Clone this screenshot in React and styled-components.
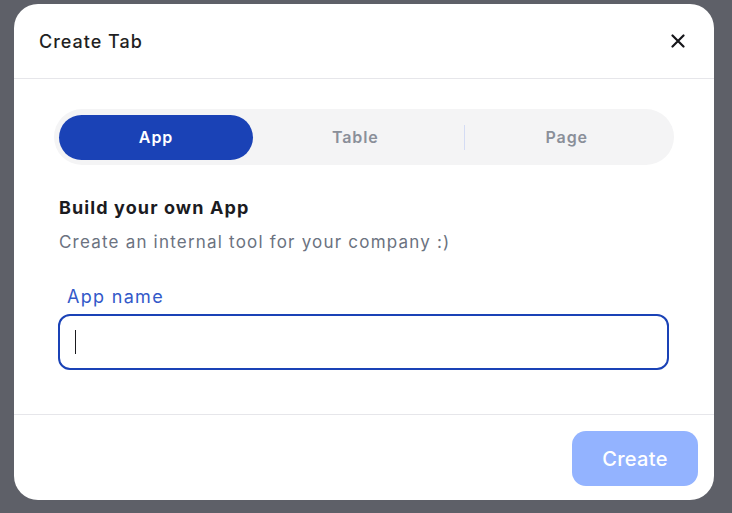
import React from "react";
import styled, { createGlobalStyle } from "styled-components";

const GlobalStyle = createGlobalStyle`
	html, body {
		margin: 0;
		padding: 0;
		background: #5e6068;
	}
	* {
		box-sizing: border-box;
	}
`;

const Backdrop = styled.div`
	width: 732px;
	height: 513px;
	padding: 4px 18px 0 14px;
	font-family: "Inter", "Noto Sans", sans-serif;
`;

const Modal = styled.div`
	width: 700px;
	height: 496px;
	background: #ffffff;
	border-radius: 24px;
	display: flex;
	flex-direction: column;
	overflow: hidden;
`;

const Header = styled.div`
	height: 75px;
	display: flex;
	align-items: center;
	justify-content: space-between;
	padding: 0 27px 0 25px;
	border-bottom: 1px solid #e6e6ea;
`;

const Title = styled.h1`
	margin: 0;
	font-size: 18px;
	font-weight: 500;
	letter-spacing: 1px;
	color: #1f1f23;
`;

const CloseButton = styled.button`
	border: none;
	background: none;
	padding: 0;
	width: 18px;
	height: 18px;
	display: flex;
	align-items: center;
	justify-content: center;
	cursor: pointer;
`;

const Body = styled.div`
	flex: 1;
	padding: 30px 40px 0 40px;
	border-bottom: 1px solid #e6e6ea;
`;

const Tabs = styled.div`
	height: 56px;
	padding: 5px;
	border-radius: 28px;
	background: #f4f4f5;
	display: flex;
	align-items: center;
`;

const Tab = styled.button`
	flex: ${(props) => (props.$active ? "0 0 194px" : "1")};
	height: 45px;
	border: none;
	border-radius: 23px;
	background: ${(props) => (props.$active ? "#1a42b6" : "transparent")};
	color: ${(props) => (props.$active ? "#ffffff" : "#8a8f99")};
	font-family: inherit;
	font-size: 16px;
	font-weight: 600;
	letter-spacing: 0.9px;
	cursor: pointer;
`;

const TabDivider = styled.div`
	width: 1px;
	height: 25px;
	margin-left: 6px;
	background: #d4dcf4;
`;

const Content = styled.div`
	padding: 0 5px;
`;

const Heading = styled.h2`
	margin: 32px 0 0;
	font-size: 18px;
	font-weight: 700;
	line-height: 22px;
	letter-spacing: 1.1px;
	color: #1b1b1f;
`;

const Subtitle = styled.p`
	margin: 12px 0 0;
	font-size: 17px;
	line-height: 22px;
	letter-spacing: 1.2px;
	color: #6b7280;
`;

const Label = styled.label`
	display: block;
	margin: 33px 0 0 8px;
	font-size: 18px;
	line-height: 22px;
	letter-spacing: 1.3px;
	color: #3359c9;
`;

const Field = styled.div`
	position: relative;
`;

const Input = styled.input`
	display: block;
	width: 611px;
	height: 56px;
	margin: 6px 0 0 -1px;
	padding: 0 16px;
	border: 2px solid #1a42b6;
	border-radius: 12px;
	outline: none;
	font-family: inherit;
	font-size: 17px;
	color: #1b1b1f;
`;

const Caret = styled.span`
	position: absolute;
	left: 16px;
	top: 16px;
	width: 1px;
	height: 24px;
	background: #1b1b1f;
`;

const Footer = styled.div`
	height: 85px;
	display: flex;
	justify-content: flex-end;
	align-items: flex-start;
	padding: 16px 16px 0 0;
`;

const CreateButton = styled.button`
	width: 126px;
	height: 55px;
	border: none;
	border-radius: 14px;
	background: #93b3ff;
	color: #ffffff;
	font-family: inherit;
	font-size: 20px;
	font-weight: 500;
	letter-spacing: 0.3px;
	cursor: not-allowed;
`;

export default () => {
	return (
		<>
			<GlobalStyle />
			<Backdrop>
				<Modal>
					<Header>
						<Title>Create Tab</Title>
						<CloseButton aria-label="Close">
							<svg width="14" height="14" viewBox="0 0 14 14">
								<path
									d="M1.5 1.5 L12.5 12.5 M12.5 1.5 L1.5 12.5"
									stroke="#16161a"
									strokeWidth="2.2"
									strokeLinecap="round"
								/>
							</svg>
						</CloseButton>
					</Header>
					<Body>
						<Tabs>
							<Tab $active>App</Tab>
							<Tab>Table</Tab>
							<TabDivider />
							<Tab>Page</Tab>
						</Tabs>
						<Content>
							<Heading>Build your own App</Heading>
							<Subtitle>Create an internal tool for your company :)</Subtitle>
							<Label>App name</Label>
							<Field>
								<Input />
								<Caret />
							</Field>
						</Content>
					</Body>
					<Footer>
						<CreateButton disabled>Create</CreateButton>
					</Footer>
				</Modal>
			</Backdrop>
		</>
	);
};
